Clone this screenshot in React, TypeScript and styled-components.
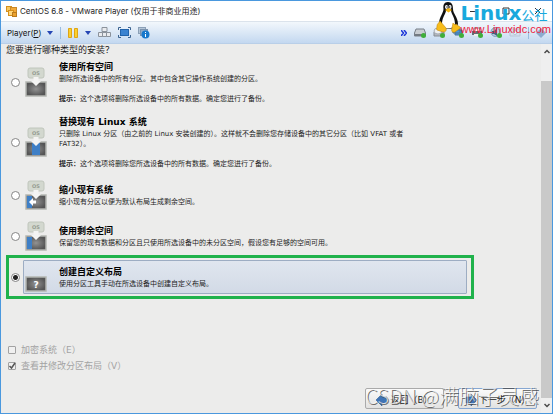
import React from "react";
import styled, { createGlobalStyle, css } from "styled-components";

const Global = createGlobalStyle`
  * { box-sizing: border-box; }
  html, body, #root { height: 100%; margin: 0; }
  body { font-family: "DejaVu Sans", "Noto Sans CJK SC", sans-serif; color: #1c1c1c; }
  button, input { font: inherit; margin: 0; }
`;

const Window = styled.div`
  position: relative;
  display: flex;
  flex-direction: column;
  min-height: 100vh;
  border: 1px solid #4a98de;
  background: #ececeb;
`;

const TitleBar = styled.header`
  display: flex;
  align-items: center;
  gap: 3px;
  height: 20px;
  padding: 0 10px 0 5px;
  background: #fff;
`;

const Title = styled.h1`
  flex: 1;
  margin: 0;
  font: 400 8px/12px Inter, "Noto Sans CJK SC", sans-serif;
`;

const WindowControls = styled.div`
  display: flex;
  gap: 24px;
`;

const IconButton = styled.button`
  display: flex;
  align-items: center;
  padding: 0;
  border: 0;
  background: none;
`;

const Toolbar = styled.nav`
  display: flex;
  align-items: center;
  justify-content: space-between;
  height: 23px;
  padding: 0 6px;
  border-top: 1px solid #dbe3ec;
  border-bottom: 1px solid #b9cfe8;
  background: linear-gradient(#f2f7fc, #dbe8f6 50%, #c3d8f0);
`;

const Group = styled.div`
  display: flex;
  align-items: center;
  gap: 7px;
`;

const MenuButton = styled(IconButton)`
  gap: 6px;
  font: 400 8px/12px Inter, sans-serif;
  color: #111;
`;

const Divider = styled.span`
  width: 1px;
  height: 12px;
  background: #98bce0;
`;

const Body = styled.div`
  display: flex;
  flex: 1;
`;

const Content = styled.main`
  display: flex;
  flex: 1;
  flex-direction: column;
  padding: 0 4px 4px 5px;
`;

const Question = styled.h2`
  margin: 0 0 2px;
  font-size: 9px;
  font-weight: 400;
  line-height: 12px;
`;

const Options = styled.form`
  display: flex;
  flex-direction: column;
  gap: 7px;
  padding: 0 68px 0 5px;
`;

const OptionRow = styled.label<{ $marked?: boolean }>`
  display: flex;
  align-items: center;
  gap: 3px;
  padding-right: 2px;
  ${(p) => p.$marked && css`outline: 3px solid #20b24b; outline-offset: 2px;`}
`;

const Radio = styled.input.attrs({ type: "radio" })`
  appearance: none;
  flex: none;
  width: 9px;
  height: 9px;
  border: 1px solid #858585;
  border-radius: 50%;
  background: #fff;
  &:checked { background: radial-gradient(circle, #222 0 2px, #fff 3px); }
`;

const Card = styled.div<{ $selected?: boolean }>`
  display: flex;
  flex: 1;
  align-items: center;
  gap: 12px;
  min-height: 33px;
  padding: 1px;
  border: 1px solid transparent;
  border-radius: 1px;
  ${(p) => p.$selected && css`
    border-color: #9dadc3;
    background: linear-gradient(#e0e6ef, #d2dae6);
  `}
`;

const OptionTitle = styled.strong`
  display: block;
  font-size: 9px;
  line-height: 14px;
  color: #000;
`;

const Text = styled.p`
  max-width: 360px;
  margin: 0;
  font-size: 7px;
  line-height: 10px;
`;

const Note = styled(Text)`
  margin-top: 10px;
`;

const Checks = styled.div`
  display: flex;
  flex-direction: column;
  gap: 4px;
  margin: 50px 0 0 2px;
`;

const CheckLabel = styled.label`
  display: flex;
  align-items: center;
  gap: 5px;
  font-size: 9px;
  line-height: 12px;
  color: #a3a3a3;
`;

const CheckSlot = styled.span`
  display: grid;
  > * { grid-area: 1 / 1; }
`;

const Checkbox = styled.input.attrs({ type: "checkbox" })`
  appearance: none;
  width: 8px;
  height: 8px;
  border: 1px solid #a2a2a2;
  border-radius: 1px;
  background: #f0f0f0;
  & + svg { visibility: hidden; }
  &:checked + svg { visibility: visible; }
`;

const Actions = styled.footer`
  display: flex;
  justify-content: flex-end;
  gap: 14px;
  margin-top: auto;
`;

const ActionButton = styled.button<{ $primary?: boolean }>`
  display: flex;
  align-items: center;
  justify-content: center;
  gap: 2px;
  width: 79px;
  height: 21px;
  padding: 2px 0 0;
  border: 1px solid ${(p) => (p.$primary ? "#86a7d2" : "#aaa")};
  border-radius: 2px;
  background: linear-gradient(#fbfbfb, #e2e2e1);
  font-size: 9px;
  color: #222;
`;

const ScrollBar = styled.div`
  display: flex;
  flex-direction: column;
  align-items: center;
  width: 11px;
  background: #efefef;
`;

const ScrollButton = styled(IconButton)`
  justify-content: center;
  height: 15px;
`;

const Thumb = styled.div`
  flex: 1;
  width: 100%;
  margin-top: 22px;
  background: #c9c9c9;
`;

const SiteMark = styled.div`
  position: absolute;
  top: 0;
  right: 1px;
  display: flex;
  align-items: flex-start;
`;

const SiteWords = styled.div`
  display: flex;
  flex-direction: column;
  margin-top: 2px;
`;

const SiteName = styled.span`
  font: 700 20px/21px "DejaVu Sans", sans-serif;
  color: #18a9dd;
  white-space: nowrap;
  small { font: 400 13px/20px "Noto Sans CJK SC", sans-serif; }
`;

const SiteUrl = styled.a`
  font: 400 11px/8px "Liberation Sans", sans-serif;
  color: #ee1c3c;
  text-decoration: none;
`;

const AuthorMark = styled.div`
  position: absolute;
  right: 13px;
  bottom: 3px;
  font: 300 20px/28px "Noto Sans CJK SC", sans-serif;
  color: rgba(250, 250, 250, 0.7);
  text-shadow: 1px 1px 0 rgba(70, 70, 70, 0.75);
  white-space: nowrap;
  pointer-events: none;
`;

type Kind = "all" | "replace" | "shrink" | "free" | "custom";

const DiskIcon = ({ kind }: { kind: Kind }) => (
  <svg width="22" height="30" viewBox="0 0 22 30" aria-hidden="true">
    <defs>
      <radialGradient id={"disk-" + kind}>
        <stop offset="0" stopColor="#929292" />
        <stop offset="1" stopColor="#555" />
      </radialGradient>
    </defs>
    <rect x="1" y="15" width="20" height="14" fill={`url(#disk-${kind})`} stroke="#b4b6b2" strokeWidth="1.5" />
    {kind === "replace" && <path d="M7 16h8v12H7z" fill="#3e7fc6" />}
    {(kind === "shrink" || kind === "free") && <path d="M2 16h5v12H2z" fill="#3e7fc6" />}
    {kind === "shrink" && <path d="M4 22l4-4v2.500h3v3H8V26z" fill="#fff" />}
    {kind === "custom" ? (
      <text x="11" y="25.500" textAnchor="middle" fontFamily="DejaVu Sans" fontWeight="700" fontSize="9" fill="#fff">?</text>
    ) : (
      <>
        <rect x="3" y="1" width="16" height="10" rx="2" fill="#d3d8cf" stroke="#c0c6bc" />
        <text x="11" y="8" textAnchor="middle" fontFamily="DejaVu Sans" fontWeight="700" fontSize="5" fill="#959c91">OS</text>
        <path d="M8.500 10h5v4H16l-5 5-5-5h2.500z" fill="#f4f4f3" />
      </>
    )}
  </svg>
);

const Caret = () => (
  <svg width="6" height="4" viewBox="0 0 6 4" aria-hidden="true"><path d="M0 0h6L3 4z" fill="#2646b4" /></svg>
);

const AppIcon = () => (
  <svg width="11" height="11" viewBox="0 0 11 11" aria-hidden="true">
    <rect x="0.500" y="0.500" width="5" height="5" fill="#f7c860" stroke="#d58f1b" />
    <rect x="4.500" y="1.500" width="6" height="5" fill="#f1a93a" stroke="#c9892a" />
    <rect x="2.500" y="4.500" width="5" height="5" fill="#ffd77d" stroke="#d58f1b" />
    <rect x="6.500" y="6.500" width="4" height="4" fill="#eca22d" stroke="#b97b1e" />
  </svg>
);

const PauseIcon = () => (
  <svg width="10" height="10" viewBox="0 0 10 10" aria-hidden="true">
    <path d="M.5.5h3v9h-3zM6.500.5h3v9h-3z" fill="#fbd02e" stroke="#dfa515" />
  </svg>
);

const KeysIcon = () => (
  <svg width="13" height="11" viewBox="0 0 13 11" aria-hidden="true">
    <path d="M4 .5h5v4H4zM.5 5.500h4v4h-4zM4.500 5.500h4v4h-4zM8.500 5.500h4v4h-4z" fill="#e9ebee" stroke="#8b929b" />
  </svg>
);

const FullScreenIcon = () => (
  <svg width="13" height="11" viewBox="0 0 13 11" aria-hidden="true">
    <rect x="2.500" y="2.500" width="8" height="6" fill="#3b83d0" stroke="#2364ab" />
    <path d="M.5 3V.5H3M10 .5h2.500V3M.5 8v2.500H3M10 10.500h2.500V8" fill="none" stroke="#3d6490" />
  </svg>
);

const UnityIcon = () => (
  <svg width="12" height="12" viewBox="0 0 12 12" aria-hidden="true">
    <rect x="0.500" y="0.500" width="7" height="6" fill="#b5c6d8" stroke="#8ba0b7" />
    <rect x="2.500" y="2.500" width="7" height="6" fill="#8faac8" stroke="#7b93ae" />
    <circle cx="7.500" cy="7.500" r="4" fill="#1878cc" />
    <path d="M7.500 5v1M7.500 7v3" stroke="#fff" />
  </svg>
);

const ReadyDot = () => <circle cx="9.500" cy="8.500" r="2.500" fill="#3fae3b" />;

type Device = "disk" | "cd" | "network" | "printer" | "sound" | "camera";

const DeviceIcon = ({ kind }: { kind: Device }) => (
  <svg width="12" height="11" viewBox="0 0 12 11" aria-hidden="true">
    {kind === "disk" && <><path d="M2 2h8l1.500 4v3H.5V6z" fill="#c9cdd2" stroke="#777e87" /><path d="M1 7h10v2H1z" fill="#747b83" /></>}
    {kind === "cd" && <><path d="M1 5h10v4H1z" fill="#b4b9bf" stroke="#858b94" /><ellipse cx="5" cy="4" rx="4" ry="3" fill="#eceff2" stroke="#a7adb5" /></>}
    {kind === "network" && <><path d="M1 1h7v5H1zM3 3h7v5H3z" fill="#4b96d9" stroke="#4b7299" /></>}
    {kind === "printer" && <><path d="M3 1h6v4H3z" fill="#fff" stroke="#777" /><path d="M1 4h10v4H1z" fill="#666c75" /><path d="M3 7h6v2H3z" fill="#eee" /></>}
    {kind === "sound" && <><circle cx="5.500" cy="5" r="4.500" fill="#b7cce3" stroke="#7b9abb" /><path d="M2 4h2l3-3v8L4 7H2z" fill="#465f7c" /></>}
    {kind === "camera" && <><path d="M1 2h10v7H1z" fill="#d5e0ed" stroke="#b7c6d8" /><circle cx="6" cy="5.500" r="2" fill="#edf3fa" stroke="#b4c3d5" /></>}
    {kind !== "camera" && <ReadyDot />}
  </svg>
);

const Penguin = () => (
  <svg width="25" height="32" viewBox="0 0 25 32" aria-hidden="true">
    <path d="M12 1c-4 0-5 3-4.500 7C7.500 12 3 16 3 23c1 6 17 7 19 0 0-7-5-10-5-15 0-4-1-7-5-7z" fill="#111" />
    <path d="M10 10c-1 4-4 7-4 13 1 6 11 6 13 0 0-6-3-9-4-13z" fill="#fff" />
    <ellipse cx="10.500" cy="6" rx="1.500" ry="2" fill="#fff" /><ellipse cx="14" cy="6" rx="1.500" ry="2" fill="#fff" />
    <circle cx="11" cy="6" r=".7" /><circle cx="13.700" cy="6" r=".7" />
    <path d="M9 9l3.500-2L16 9l-3.500 2.500z" fill="#f5b614" />
    <path d="M4 20l6 7c1 3-1 4-3 4l-6-2c-1-1 0-2 0-4s1-2 3-5zM17 22c2 3 4 0 4 2l3 2c1 1 0 2-1 2l-4 3c-3 1-4-1-3-4z" fill="#f7bc1b" stroke="#c58b13" strokeWidth=".6" />
  </svg>
);

const ArrowIcon = ({ back }: { back?: boolean }) => (
  <svg width="12" height="12" viewBox="0 0 12 12" aria-hidden="true">
    <path d={back ? "M0 6l6-6v3h5v6H6v3z" : "M12 6L6 0v3H1v6h5v3z"} fill="#3f74b5" stroke="#2b5a96" strokeWidth=".6" />
  </svg>
);

const Chevron = ({ up }: { up?: boolean }) => (
  <svg width="6" height="5" viewBox="0 0 6 5" aria-hidden="true">
    <path d={up ? "M.5 4L3 1.500 5.500 4" : "M.5 1L3 3.500 5.500 1"} fill="none" stroke="#4a4a4a" strokeWidth="1.500" />
  </svg>
);

const options: { kind: Kind; title: string; text: string; note?: string }[] = [
  { kind: "all", title: "使用所有空间", text: "删除所选设备中的所有分区。其中包含其它操作系统创建的分区。", note: "这个选项将删除所选设备中的所有数据。确定您进行了备份。" },
  { kind: "replace", title: "替换现有 Linux 系统", text: "只删除 Linux 分区（由之前的 Linux 安装创建的）。这样就不会删除您存储设备中的其它分区（比如 VFAT 或者 FAT32）。", note: "这个选项将删除您所选设备中的所有数据。确定您进行了备份。" },
  { kind: "shrink", title: "缩小现有系统", text: "缩小现有分区以便为默认布局生成剩余空间。" },
  { kind: "free", title: "使用剩余空间", text: "保留您的现有数据和分区且只使用所选设备中的未分区空间，假设您有足够的空间可用。" },
  { kind: "custom", title: "创建自定义布局", text: "使用分区工具手动在所选设备中创建自定义布局。" },
];

const devices: Device[] = ["disk", "cd", "network", "printer", "sound", "camera"];

const Check = ({ label, checked }: { label: string; checked?: boolean }) => (
  <CheckLabel>
    <CheckSlot>
      <Checkbox disabled defaultChecked={checked} />
      <svg width="8" height="8" viewBox="0 0 8 8" aria-hidden="true"><path d="M1.500 4l2 2 3.500-5" fill="none" stroke="#555" strokeWidth="1.500" /></svg>
    </CheckSlot>
    {label}
  </CheckLabel>
);

export default function App() {
  return (
    <>
      <Global />
      <Window lang="zh-CN">
        <TitleBar>
          <AppIcon />
          <Title>CentOS 6.8 - VMware Player (仅用于非商业用途)</Title>
          <WindowControls>
            <IconButton aria-label="最小化"><svg width="8" height="8"><path d="M0 4.500h8" stroke="#333" /></svg></IconButton>
            <IconButton aria-label="最大化"><svg width="8" height="8"><path d="M1 1h6v6H1z" fill="none" stroke="#333" /></svg></IconButton>
            <IconButton aria-label="关闭"><svg width="8" height="8"><path d="M1 1l6 6M7 1L1 7" stroke="#333" /></svg></IconButton>
          </WindowControls>
        </TitleBar>
        <Toolbar>
          <Group>
            <MenuButton><span>Player(<u>P</u>)</span><Caret /></MenuButton>
            <Divider />
            <IconButton aria-label="暂停"><PauseIcon /></IconButton>
            <IconButton aria-label="电源选项"><Caret /></IconButton>
            <IconButton aria-label="发送按键"><KeysIcon /></IconButton>
            <IconButton aria-label="全屏"><FullScreenIcon /></IconButton>
            <IconButton aria-label="信息"><UnityIcon /></IconButton>
          </Group>
          <Group>
            <IconButton aria-label="更多"><svg width="6" height="6"><path d="M0 0l2.500 3L0 6M3 0l2.500 3L3 6" fill="none" stroke="#1d36d8" strokeWidth="1.500" /></svg></IconButton>
            {devices.map((kind) => <IconButton key={kind} aria-label={kind}><DeviceIcon kind={kind} /></IconButton>)}
            <Divider />
            <IconButton aria-label="帮助"><svg width="10" height="10"><path d="M5 0l5 5-5 5-5-5z" fill="#8cabcf" /></svg></IconButton>
          </Group>
        </Toolbar>
        <Body>
          <Content>
            <Question>您要进行哪种类型的安装？</Question>
            <Options>
              {options.map((o) => {
                const custom = o.kind === "custom";
                return (
                  <OptionRow key={o.kind} $marked={custom}>
                    <Radio name="layout" value={o.kind} defaultChecked={custom} />
                    <Card $selected={custom}>
                      <DiskIcon kind={o.kind} />
                      <div>
                        <OptionTitle>{o.title}</OptionTitle>
                        <Text>{o.text}</Text>
                        {o.note && <Note><b>提示：</b>{o.note}</Note>}
                      </div>
                    </Card>
                  </OptionRow>
                );
              })}
            </Options>
            <Checks>
              <Check label="加密系统（E）" />
              <Check label="查看并修改分区布局（V）" checked />
            </Checks>
            <Actions>
              <ActionButton><ArrowIcon back />返回（B）</ActionButton>
              <ActionButton $primary><ArrowIcon />下一步（N）</ActionButton>
            </Actions>
          </Content>
          <ScrollBar>
            <ScrollButton aria-label="向上滚动"><Chevron up /></ScrollButton>
            <Thumb />
            <ScrollButton aria-label="向下滚动"><Chevron /></ScrollButton>
          </ScrollBar>
        </Body>
        <SiteMark>
          <Penguin />
          <SiteWords>
            <SiteName>Linux<small>公社</small></SiteName>
            <SiteUrl href="#">www.Linuxidc.com</SiteUrl>
          </SiteWords>
        </SiteMark>
        <AuthorMark>CSDN @满脑子灵感</AuthorMark>
      </Window>
    </>
  );
}
